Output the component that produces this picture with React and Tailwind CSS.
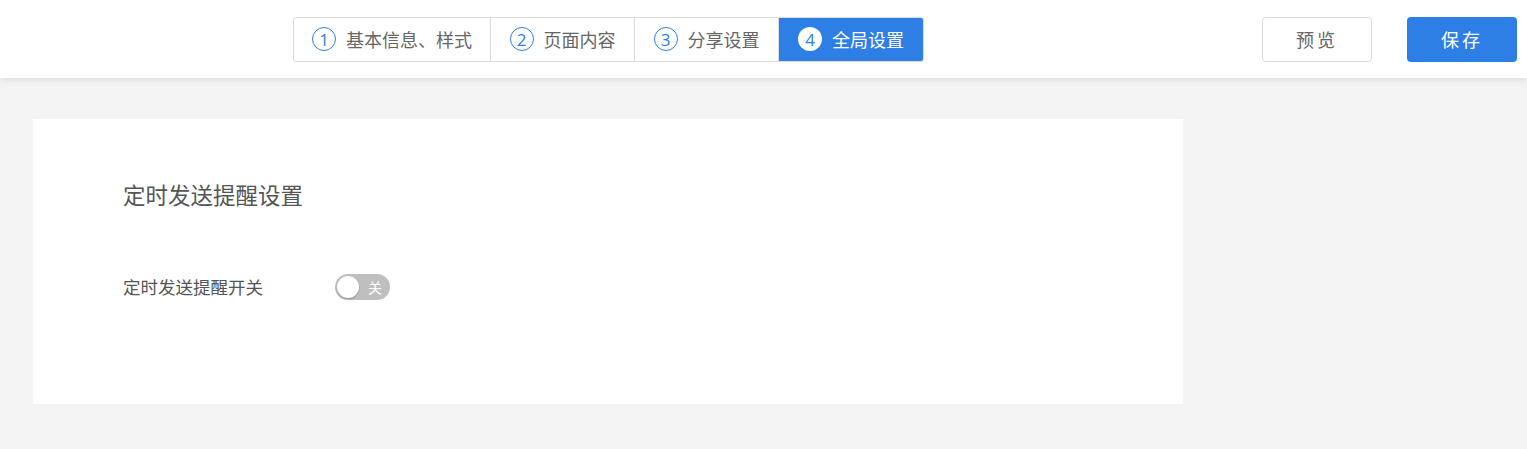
import React from 'react';

const STEPS = [
  { label: '基本信息、样式', w: 'w-[196px]' },
  { label: '页面内容', w: 'w-[144px]' },
  { label: '分享设置', w: 'w-[144px]' },
  { label: '全局设置', w: 'w-[145px]' },
];

const font = { fontFamily: '"Noto Sans CJK SC", "Open Sans", sans-serif' };

const App = () => {
  const active = 3;

  return (
    <div className="min-h-[449px] bg-[#f4f4f4]" style={font}>
      {/* Header */}
      <div className="h-[78px] bg-white flex items-center pl-[293px] pr-[10px] shadow-[0_2px_6px_rgba(0,0,0,0.1)] relative z-10">
        <div className="flex h-[45px] border border-[#dcdcdc] rounded-[3px] overflow-hidden">
          {STEPS.map((step, i) => (
            <div
              key={step.label}
              className={`flex items-center justify-center gap-[10px] h-full ${step.w} ${
                i > 0 ? 'border-l border-[#dcdcdc]' : ''
              } ${i === active ? 'bg-[#2d7fe6] text-white border-[#2d7fe6]' : 'text-[#666]'}`}
            >
              <span
                className={`w-[24px] h-[24px] rounded-full flex items-center justify-center text-[17px] leading-none ${
                  i === active
                    ? 'bg-white text-[#2d7fe6]'
                    : 'border border-[#2d7fe6] text-[#2d7fe6]'
                }`}
                style={{ fontFamily: '"Open Sans", sans-serif' }}
              >
                {i + 1}
              </span>
              <span className="text-[18px] whitespace-nowrap">{step.label}</span>
            </div>
          ))}
        </div>

        <div className="ml-auto flex items-center gap-[35px]">
          <button className="w-[110px] h-[45px] border border-[#dcdcdc] rounded-[4px] bg-white text-[#666] text-[18px] tracking-[3px]">
            预览
          </button>
          <button className="w-[110px] h-[45px] rounded-[4px] bg-[#2d7fe6] text-white text-[18px] tracking-[3px]">
            保存
          </button>
        </div>
      </div>

      {/* Content */}
      <div className="pt-[41px] pl-[33px] pb-[45px]">
        <div className="w-[1150px] h-[285px] bg-white pl-[90px] pt-[58px]">
          <h2 className="text-[22.5px] text-[#555] leading-[34px]">定时发送提醒设置</h2>

          <div className="flex items-center mt-[63px]">
            <span className="w-[212px] text-[17.5px] text-[#555]">定时发送提醒开关</span>
            <div className="w-[55px] h-[26px] rounded-full bg-[#bfbfbf] flex items-center pl-[2px] pr-[8px]">
              <span className="w-[22px] h-[22px] rounded-full bg-white shadow-[0_1px_2px_rgba(0,0,0,0.25)]" />
              <span className="ml-auto text-[14px] text-white leading-none">关</span>
            </div>
          </div>
        </div>
      </div>
    </div>
  );
};

export default App;
